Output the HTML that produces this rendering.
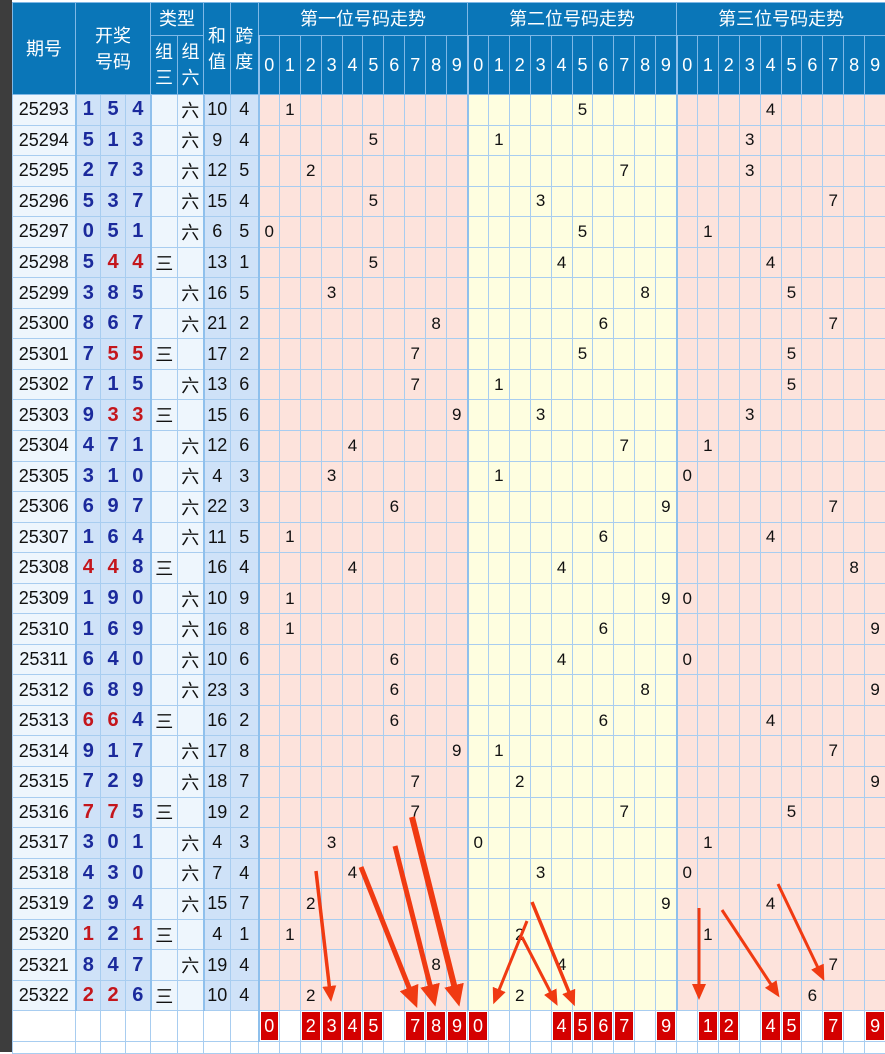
<!DOCTYPE html>
<html><head><meta charset="utf-8">
<style>
html,body{margin:0;padding:0;width:885px;height:1052px;overflow:hidden;background:#fff;}
#strip{position:absolute;left:0;top:0;width:12px;height:1052px;background:#3d3d3d;}
table{position:absolute;left:12px;top:2px;border-collapse:collapse;table-layout:fixed;width:873px;font-family:"Liberation Sans","Noto Sans CJK SC",sans-serif;}
td{border:1px solid #a8cdf0;padding:0;text-align:center;font-size:17px;color:#111;overflow:hidden;white-space:nowrap;}
tr.h td{background:#0a76b8;color:#fff;border-color:#7fb8e6;font-size:18px;line-height:26px;}
tr.h2 td{font-size:18px;}
tr.x{height:30.55px;}
tr.x td:nth-child(1){background:#eef6fd;font-size:18px;}
tr.x td:nth-child(n+2):nth-child(-n+4){background:#cfe2f8;font-weight:bold;color:#1b2a9c;font-size:20px;}
tr.x td.rd{color:#c4161c !important;}
tr.x td:nth-child(5),tr.x td:nth-child(6){background:#eef6fd;font-size:18px;}
tr.x td:nth-child(7),tr.x td:nth-child(8){background:#cfe2f8;font-size:18px;}
tr.x td:nth-child(n+9):nth-child(-n+18){background:#fde3dc;}
tr.x td:nth-child(n+19):nth-child(-n+28){background:#fefee0;}
tr.x td:nth-child(n+29){background:#fde3dc;}
tr.x td:nth-child(9),tr.x td:nth-child(19),tr.x td:nth-child(29),tr.h2 td:nth-child(3),tr.h2 td:nth-child(13),tr.h2 td:nth-child(23){border-left:2px solid #8fc0ec;}
tr.x td:nth-child(2),tr.x td:nth-child(5),tr.x td:nth-child(7),tr.b td:nth-child(9){border-left:2px solid #8fc0ec;}
tr.b{height:31px;}
tr.b td{background:#fff;}
tr.b td.r{background:#d40000;color:#fff;font-size:18px;box-shadow:inset 0 0 0 1px #fff;}
tr.e{height:12px;}
</style></head><body>
<div id="strip"></div>
<table>
<colgroup><col style="width:63px"><col style="width:25px"><col style="width:25px"><col style="width:25px"><col style="width:27px"><col style="width:26px"><col style="width:27px"><col style="width:28px">
<col span="30" style="width:20.9px"></colgroup>
<tr class="h" style="height:33px"><td rowspan="2">期号</td><td colspan="3" rowspan="2">开奖<br>号码</td><td colspan="2">类型</td><td rowspan="2">和<br>值</td><td rowspan="2">跨<br>度</td><td colspan="10">第一位号码走势</td><td colspan="10">第二位号码走势</td><td colspan="10">第三位号码走势</td></tr>
<tr class="h h2" style="height:59px"><td>组<br>三</td><td>组<br>六</td><td>0</td><td>1</td><td>2</td><td>3</td><td>4</td><td>5</td><td>6</td><td>7</td><td>8</td><td>9</td><td>0</td><td>1</td><td>2</td><td>3</td><td>4</td><td>5</td><td>6</td><td>7</td><td>8</td><td>9</td><td>0</td><td>1</td><td>2</td><td>3</td><td>4</td><td>5</td><td>6</td><td>7</td><td>8</td><td>9</td></tr>
<tr class="x"><td>25293</td><td>1</td><td>5</td><td>4</td><td></td><td>六</td><td>10</td><td>4</td><td></td><td>1</td><td></td><td></td><td></td><td></td><td></td><td></td><td></td><td></td><td></td><td></td><td></td><td></td><td></td><td>5</td><td></td><td></td><td></td><td></td><td></td><td></td><td></td><td></td><td>4</td><td></td><td></td><td></td><td></td><td></td></tr>
<tr class="x"><td>25294</td><td>5</td><td>1</td><td>3</td><td></td><td>六</td><td>9</td><td>4</td><td></td><td></td><td></td><td></td><td></td><td>5</td><td></td><td></td><td></td><td></td><td></td><td>1</td><td></td><td></td><td></td><td></td><td></td><td></td><td></td><td></td><td></td><td></td><td></td><td>3</td><td></td><td></td><td></td><td></td><td></td><td></td></tr>
<tr class="x"><td>25295</td><td>2</td><td>7</td><td>3</td><td></td><td>六</td><td>12</td><td>5</td><td></td><td></td><td>2</td><td></td><td></td><td></td><td></td><td></td><td></td><td></td><td></td><td></td><td></td><td></td><td></td><td></td><td></td><td>7</td><td></td><td></td><td></td><td></td><td></td><td>3</td><td></td><td></td><td></td><td></td><td></td><td></td></tr>
<tr class="x"><td>25296</td><td>5</td><td>3</td><td>7</td><td></td><td>六</td><td>15</td><td>4</td><td></td><td></td><td></td><td></td><td></td><td>5</td><td></td><td></td><td></td><td></td><td></td><td></td><td></td><td>3</td><td></td><td></td><td></td><td></td><td></td><td></td><td></td><td></td><td></td><td></td><td></td><td></td><td></td><td>7</td><td></td><td></td></tr>
<tr class="x"><td>25297</td><td>0</td><td>5</td><td>1</td><td></td><td>六</td><td>6</td><td>5</td><td>0</td><td></td><td></td><td></td><td></td><td></td><td></td><td></td><td></td><td></td><td></td><td></td><td></td><td></td><td></td><td>5</td><td></td><td></td><td></td><td></td><td></td><td>1</td><td></td><td></td><td></td><td></td><td></td><td></td><td></td><td></td></tr>
<tr class="x"><td>25298</td><td>5</td><td class="rd">4</td><td class="rd">4</td><td>三</td><td></td><td>13</td><td>1</td><td></td><td></td><td></td><td></td><td></td><td>5</td><td></td><td></td><td></td><td></td><td></td><td></td><td></td><td></td><td>4</td><td></td><td></td><td></td><td></td><td></td><td></td><td></td><td></td><td></td><td>4</td><td></td><td></td><td></td><td></td><td></td></tr>
<tr class="x"><td>25299</td><td>3</td><td>8</td><td>5</td><td></td><td>六</td><td>16</td><td>5</td><td></td><td></td><td></td><td>3</td><td></td><td></td><td></td><td></td><td></td><td></td><td></td><td></td><td></td><td></td><td></td><td></td><td></td><td></td><td>8</td><td></td><td></td><td></td><td></td><td></td><td></td><td>5</td><td></td><td></td><td></td><td></td></tr>
<tr class="x"><td>25300</td><td>8</td><td>6</td><td>7</td><td></td><td>六</td><td>21</td><td>2</td><td></td><td></td><td></td><td></td><td></td><td></td><td></td><td></td><td>8</td><td></td><td></td><td></td><td></td><td></td><td></td><td></td><td>6</td><td></td><td></td><td></td><td></td><td></td><td></td><td></td><td></td><td></td><td></td><td>7</td><td></td><td></td></tr>
<tr class="x"><td>25301</td><td>7</td><td class="rd">5</td><td class="rd">5</td><td>三</td><td></td><td>17</td><td>2</td><td></td><td></td><td></td><td></td><td></td><td></td><td></td><td>7</td><td></td><td></td><td></td><td></td><td></td><td></td><td></td><td>5</td><td></td><td></td><td></td><td></td><td></td><td></td><td></td><td></td><td></td><td>5</td><td></td><td></td><td></td><td></td></tr>
<tr class="x"><td>25302</td><td>7</td><td>1</td><td>5</td><td></td><td>六</td><td>13</td><td>6</td><td></td><td></td><td></td><td></td><td></td><td></td><td></td><td>7</td><td></td><td></td><td></td><td>1</td><td></td><td></td><td></td><td></td><td></td><td></td><td></td><td></td><td></td><td></td><td></td><td></td><td></td><td>5</td><td></td><td></td><td></td><td></td></tr>
<tr class="x"><td>25303</td><td>9</td><td class="rd">3</td><td class="rd">3</td><td>三</td><td></td><td>15</td><td>6</td><td></td><td></td><td></td><td></td><td></td><td></td><td></td><td></td><td></td><td>9</td><td></td><td></td><td></td><td>3</td><td></td><td></td><td></td><td></td><td></td><td></td><td></td><td></td><td></td><td>3</td><td></td><td></td><td></td><td></td><td></td><td></td></tr>
<tr class="x"><td>25304</td><td>4</td><td>7</td><td>1</td><td></td><td>六</td><td>12</td><td>6</td><td></td><td></td><td></td><td></td><td>4</td><td></td><td></td><td></td><td></td><td></td><td></td><td></td><td></td><td></td><td></td><td></td><td></td><td>7</td><td></td><td></td><td></td><td>1</td><td></td><td></td><td></td><td></td><td></td><td></td><td></td><td></td></tr>
<tr class="x"><td>25305</td><td>3</td><td>1</td><td>0</td><td></td><td>六</td><td>4</td><td>3</td><td></td><td></td><td></td><td>3</td><td></td><td></td><td></td><td></td><td></td><td></td><td></td><td>1</td><td></td><td></td><td></td><td></td><td></td><td></td><td></td><td></td><td>0</td><td></td><td></td><td></td><td></td><td></td><td></td><td></td><td></td><td></td></tr>
<tr class="x"><td>25306</td><td>6</td><td>9</td><td>7</td><td></td><td>六</td><td>22</td><td>3</td><td></td><td></td><td></td><td></td><td></td><td></td><td>6</td><td></td><td></td><td></td><td></td><td></td><td></td><td></td><td></td><td></td><td></td><td></td><td></td><td>9</td><td></td><td></td><td></td><td></td><td></td><td></td><td></td><td>7</td><td></td><td></td></tr>
<tr class="x"><td>25307</td><td>1</td><td>6</td><td>4</td><td></td><td>六</td><td>11</td><td>5</td><td></td><td>1</td><td></td><td></td><td></td><td></td><td></td><td></td><td></td><td></td><td></td><td></td><td></td><td></td><td></td><td></td><td>6</td><td></td><td></td><td></td><td></td><td></td><td></td><td></td><td>4</td><td></td><td></td><td></td><td></td><td></td></tr>
<tr class="x"><td>25308</td><td class="rd">4</td><td class="rd">4</td><td>8</td><td>三</td><td></td><td>16</td><td>4</td><td></td><td></td><td></td><td></td><td>4</td><td></td><td></td><td></td><td></td><td></td><td></td><td></td><td></td><td></td><td>4</td><td></td><td></td><td></td><td></td><td></td><td></td><td></td><td></td><td></td><td></td><td></td><td></td><td></td><td>8</td><td></td></tr>
<tr class="x"><td>25309</td><td>1</td><td>9</td><td>0</td><td></td><td>六</td><td>10</td><td>9</td><td></td><td>1</td><td></td><td></td><td></td><td></td><td></td><td></td><td></td><td></td><td></td><td></td><td></td><td></td><td></td><td></td><td></td><td></td><td></td><td>9</td><td>0</td><td></td><td></td><td></td><td></td><td></td><td></td><td></td><td></td><td></td></tr>
<tr class="x"><td>25310</td><td>1</td><td>6</td><td>9</td><td></td><td>六</td><td>16</td><td>8</td><td></td><td>1</td><td></td><td></td><td></td><td></td><td></td><td></td><td></td><td></td><td></td><td></td><td></td><td></td><td></td><td></td><td>6</td><td></td><td></td><td></td><td></td><td></td><td></td><td></td><td></td><td></td><td></td><td></td><td></td><td>9</td></tr>
<tr class="x"><td>25311</td><td>6</td><td>4</td><td>0</td><td></td><td>六</td><td>10</td><td>6</td><td></td><td></td><td></td><td></td><td></td><td></td><td>6</td><td></td><td></td><td></td><td></td><td></td><td></td><td></td><td>4</td><td></td><td></td><td></td><td></td><td></td><td>0</td><td></td><td></td><td></td><td></td><td></td><td></td><td></td><td></td><td></td></tr>
<tr class="x"><td>25312</td><td>6</td><td>8</td><td>9</td><td></td><td>六</td><td>23</td><td>3</td><td></td><td></td><td></td><td></td><td></td><td></td><td>6</td><td></td><td></td><td></td><td></td><td></td><td></td><td></td><td></td><td></td><td></td><td></td><td>8</td><td></td><td></td><td></td><td></td><td></td><td></td><td></td><td></td><td></td><td></td><td>9</td></tr>
<tr class="x"><td>25313</td><td class="rd">6</td><td class="rd">6</td><td>4</td><td>三</td><td></td><td>16</td><td>2</td><td></td><td></td><td></td><td></td><td></td><td></td><td>6</td><td></td><td></td><td></td><td></td><td></td><td></td><td></td><td></td><td></td><td>6</td><td></td><td></td><td></td><td></td><td></td><td></td><td></td><td>4</td><td></td><td></td><td></td><td></td><td></td></tr>
<tr class="x"><td>25314</td><td>9</td><td>1</td><td>7</td><td></td><td>六</td><td>17</td><td>8</td><td></td><td></td><td></td><td></td><td></td><td></td><td></td><td></td><td></td><td>9</td><td></td><td>1</td><td></td><td></td><td></td><td></td><td></td><td></td><td></td><td></td><td></td><td></td><td></td><td></td><td></td><td></td><td></td><td>7</td><td></td><td></td></tr>
<tr class="x"><td>25315</td><td>7</td><td>2</td><td>9</td><td></td><td>六</td><td>18</td><td>7</td><td></td><td></td><td></td><td></td><td></td><td></td><td></td><td>7</td><td></td><td></td><td></td><td></td><td>2</td><td></td><td></td><td></td><td></td><td></td><td></td><td></td><td></td><td></td><td></td><td></td><td></td><td></td><td></td><td></td><td></td><td>9</td></tr>
<tr class="x"><td>25316</td><td class="rd">7</td><td class="rd">7</td><td>5</td><td>三</td><td></td><td>19</td><td>2</td><td></td><td></td><td></td><td></td><td></td><td></td><td></td><td>7</td><td></td><td></td><td></td><td></td><td></td><td></td><td></td><td></td><td></td><td>7</td><td></td><td></td><td></td><td></td><td></td><td></td><td></td><td>5</td><td></td><td></td><td></td><td></td></tr>
<tr class="x"><td>25317</td><td>3</td><td>0</td><td>1</td><td></td><td>六</td><td>4</td><td>3</td><td></td><td></td><td></td><td>3</td><td></td><td></td><td></td><td></td><td></td><td></td><td>0</td><td></td><td></td><td></td><td></td><td></td><td></td><td></td><td></td><td></td><td></td><td>1</td><td></td><td></td><td></td><td></td><td></td><td></td><td></td><td></td></tr>
<tr class="x"><td>25318</td><td>4</td><td>3</td><td>0</td><td></td><td>六</td><td>7</td><td>4</td><td></td><td></td><td></td><td></td><td>4</td><td></td><td></td><td></td><td></td><td></td><td></td><td></td><td></td><td>3</td><td></td><td></td><td></td><td></td><td></td><td></td><td>0</td><td></td><td></td><td></td><td></td><td></td><td></td><td></td><td></td><td></td></tr>
<tr class="x"><td>25319</td><td>2</td><td>9</td><td>4</td><td></td><td>六</td><td>15</td><td>7</td><td></td><td></td><td>2</td><td></td><td></td><td></td><td></td><td></td><td></td><td></td><td></td><td></td><td></td><td></td><td></td><td></td><td></td><td></td><td></td><td>9</td><td></td><td></td><td></td><td></td><td>4</td><td></td><td></td><td></td><td></td><td></td></tr>
<tr class="x"><td>25320</td><td class="rd">1</td><td>2</td><td class="rd">1</td><td>三</td><td></td><td>4</td><td>1</td><td></td><td>1</td><td></td><td></td><td></td><td></td><td></td><td></td><td></td><td></td><td></td><td></td><td>2</td><td></td><td></td><td></td><td></td><td></td><td></td><td></td><td></td><td>1</td><td></td><td></td><td></td><td></td><td></td><td></td><td></td><td></td></tr>
<tr class="x"><td>25321</td><td>8</td><td>4</td><td>7</td><td></td><td>六</td><td>19</td><td>4</td><td></td><td></td><td></td><td></td><td></td><td></td><td></td><td></td><td>8</td><td></td><td></td><td></td><td></td><td></td><td>4</td><td></td><td></td><td></td><td></td><td></td><td></td><td></td><td></td><td></td><td></td><td></td><td></td><td>7</td><td></td><td></td></tr>
<tr class="x"><td>25322</td><td class="rd">2</td><td class="rd">2</td><td>6</td><td>三</td><td></td><td>10</td><td>4</td><td></td><td></td><td>2</td><td></td><td></td><td></td><td></td><td></td><td></td><td></td><td></td><td></td><td>2</td><td></td><td></td><td></td><td></td><td></td><td></td><td></td><td></td><td></td><td></td><td></td><td></td><td></td><td>6</td><td></td><td></td><td></td></tr>
<tr class="b"><td></td><td></td><td></td><td></td><td></td><td></td><td></td><td></td><td class="r">0</td><td></td><td class="r">2</td><td class="r">3</td><td class="r">4</td><td class="r">5</td><td></td><td class="r">7</td><td class="r">8</td><td class="r">9</td><td class="r">0</td><td></td><td></td><td></td><td class="r">4</td><td class="r">5</td><td class="r">6</td><td class="r">7</td><td></td><td class="r">9</td><td></td><td class="r">1</td><td class="r">2</td><td></td><td class="r">4</td><td class="r">5</td><td></td><td class="r">7</td><td></td><td class="r">9</td></tr>
<tr class="e"><td></td><td></td><td></td><td></td><td></td><td></td><td></td><td></td><td></td><td></td><td></td><td></td><td></td><td></td><td></td><td></td><td></td><td></td><td></td><td></td><td></td><td></td><td></td><td></td><td></td><td></td><td></td><td></td><td></td><td></td><td></td><td></td><td></td><td></td><td></td><td></td><td></td><td></td></tr>
</table>
<svg style="position:absolute;left:0;top:0" width="885" height="1052">
<defs><marker id="a" markerWidth="16" markerHeight="14" refX="6" refY="7" orient="auto" markerUnits="userSpaceOnUse"><path d="M0,0 L16,7 L0,14 Z" fill="#f03a12"/></marker>
<marker id="b" markerWidth="22" markerHeight="20" refX="8" refY="10" orient="auto" markerUnits="userSpaceOnUse"><path d="M0,0 L22,10 L0,20 Z" fill="#f03a12"/></marker></defs>
<g stroke="#f03a12" fill="none">
<line x1="316" y1="871" x2="330" y2="992" stroke-width="3.5" marker-end="url(#a)"/>
<line x1="361" y1="867" x2="412" y2="995" stroke-width="5" marker-end="url(#b)"/>
<line x1="395" y1="846" x2="432" y2="993" stroke-width="5" marker-end="url(#b)"/>
<line x1="412" y1="817" x2="456" y2="993" stroke-width="6" marker-end="url(#b)"/>
<line x1="527" y1="921" x2="497" y2="995" stroke-width="3" marker-end="url(#a)"/>
<line x1="532" y1="902" x2="571" y2="997" stroke-width="3.5" marker-end="url(#a)"/>
<line x1="522" y1="937" x2="553" y2="997" stroke-width="3" marker-end="url(#a)"/>
<line x1="699" y1="908" x2="699" y2="990" stroke-width="3" marker-end="url(#a)"/>
<line x1="722" y1="910" x2="774" y2="989" stroke-width="3" marker-end="url(#a)"/>
<line x1="778" y1="884" x2="820" y2="972" stroke-width="3" marker-end="url(#a)"/>
</g></svg>
</body></html>
